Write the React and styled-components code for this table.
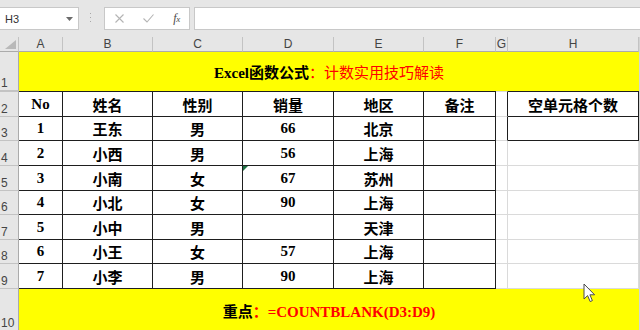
import React from "react";
import styled, { createGlobalStyle } from "styled-components";

const GlobalStyle = createGlobalStyle`
  html, body { margin: 0; padding: 0; }
  body { width: 640px; height: 330px; overflow: hidden; background: #ffffff; }
`;

const DARK = "#1e1e1e";
const LIGHT = "#dadada";
const HEAD_BG = "#e6e6e6";
const HEAD_LINE = "#c3c3c3";

const Window = styled.div`
  position: relative;
  width: 640px;
  height: 330px;
  overflow: hidden;
  background: ${HEAD_BG};
  font-family: "Liberation Sans", "Noto Sans", sans-serif;
`;

const Toolbar = styled.div`
  display: flex;
  align-items: flex-start;
  height: 37px;
  padding-top: 7px;
  box-sizing: border-box;
  background: ${HEAD_BG};
`;

const NameBox = styled.div`
  box-sizing: border-box;
  width: 79px;
  height: 23px;
  background: #fff;
  border: 1px solid #c8c8c8;
  border-left: none;
  display: flex;
  align-items: center;
  justify-content: space-between;
  padding: 0 5px 0 5px;
  font-size: 11px;
  color: #333;
`;

const Grip = styled.svg`
  margin: 6px 0 0 10px;
  flex: none;
`;

const FxBox = styled.div`
  box-sizing: border-box;
  margin-left: 12px;
  width: 86px;
  height: 23px;
  background: #fff;
  border: 1px solid #c8c8c8;
  display: grid;
  grid-template-columns: 29px 29px 27px;
  align-items: center;
  justify-items: center;
`;

const FxText = styled.span`
  font-family: "Liberation Serif", serif;
  font-style: italic;
  font-size: 12px;
  color: #4a4a4a;
  letter-spacing: -0.5px;
  & > small { font-size: 9px; }
`;

const Formula = styled.div`
  box-sizing: border-box;
  margin-left: 4px;
  flex: 1;
  height: 23px;
  background: #fff;
  border: 1px solid #c8c8c8;
  border-right: none;
`;

const Sheet = styled.div`
  display: grid;
  grid-template-columns: 19px 44px 90px 90px 91px 90px 72px 12px 131px 1px;
  grid-template-rows: 15px 39px 26px 24px 25px 25px 24px 25px 24px 25px 42px;
  background: #d4d4d4;
`;

const Corner = styled.div`
  position: relative;
  background: ${HEAD_BG};
  border-right: 1px solid ${HEAD_LINE};
  border-bottom: 1px solid #ababab;
  display: flex;
  align-items: flex-end;
  justify-content: flex-end;
  padding: 0 2px 2px 0;
`;

const ColHead = styled.div`
  background: ${HEAD_BG};
  border-right: 1px solid ${HEAD_LINE};
  border-bottom: 1px solid #ababab;
  display: flex;
  align-items: center;
  justify-content: center;
  font-size: 12px;
  color: #444;
  line-height: 1;
`;

const RowHead = styled.div`
  background: ${HEAD_BG};
  border-right: 1px solid #ababab;
  border-bottom: 1px solid ${HEAD_LINE};
  border-top: ${(p) => (p.$top ? `1px solid ${HEAD_LINE}` : "none")};
  display: flex;
  align-items: flex-end;
  padding: 0 0 1px 1px;
  font-size: 12px;
  line-height: 1;
  color: #444;
`;

const Banner = styled.div`
  grid-column: 2 / 10;
  background: #ffff00;
  display: flex;
  align-items: center;
  justify-content: center;
  font-family: "Liberation Serif", "Noto Sans CJK SC", serif;
  font-size: 15px;
`;

const Strong = styled.span`
  font-weight: 700;
  color: ${(p) => p.$color || "#000"};
`;

const Plain = styled.span`
  font-weight: 400;
  color: ${(p) => p.$color || "#000"};
`;

const Cell = styled.div`
  position: relative;
  background: #fff;
  box-sizing: border-box;
  border-right: 1px solid ${(p) => p.$r || LIGHT};
  border-bottom: 1px solid ${(p) => p.$b || LIGHT};
  border-top: ${(p) => (p.$t ? `1px solid ${p.$t}` : "none")};
  display: flex;
  align-items: center;
  justify-content: center;
  font-family: "Liberation Serif", "Noto Sans CJK SC", serif;
  font-weight: 700;
  font-size: 15px;
  color: #000;
  white-space: nowrap;
`;

const ErrorMark = styled.span`
  position: absolute;
  left: 0;
  top: 0;
  width: 0;
  height: 0;
  border-top: 5px solid #1e7145;
  border-right: 5px solid transparent;
`;

const Filler = styled.div`
  background: #d4d4d4;
`;

const Cursor = styled.svg`
  position: absolute;
  left: 583px;
  top: 283px;
`;

const rows = [
  ["1", "王东", "男", "66", "北京", ""],
  ["2", "小西", "男", "56", "上海", ""],
  ["3", "小南", "女", "67", "苏州", ""],
  ["4", "小北", "女", "90", "上海", ""],
  ["5", "小中", "男", "", "天津", ""],
  ["6", "小王", "女", "57", "上海", ""],
  ["7", "小李", "男", "90", "上海", ""],
];

const header = ["No", "姓名", "性别", "销量", "地区", "备注"];
const letters = ["A", "B", "C", "D", "E", "F", "G", "H"];

function TableRow({ rowNo, values, first }) {
  const t = first ? DARK : undefined;
  const hBox = rowNo <= 3;
  return (
    <>
      <RowHead $top={first}>{rowNo}</RowHead>
      {values.map((v, i) => (
        <Cell key={i} $r={DARK} $b={DARK} $t={t}>
          {rowNo === 5 && i === 3 && <ErrorMark />}
          {v}
        </Cell>
      ))}
      <Cell $r={hBox ? DARK : LIGHT} $t={first ? LIGHT : undefined} />
      <Cell $r={hBox ? DARK : LIGHT} $b={hBox ? DARK : LIGHT} $t={t}>
        {first ? "空单元格个数" : ""}
      </Cell>
      <Filler />
    </>
  );
}

export default function App() {
  return (
    <>
      <GlobalStyle />
      <Window>
        <Toolbar>
          <NameBox>
            <span>H3</span>
            <svg width="7" height="4" viewBox="0 0 7 4">
              <path d="M0 0 L7 0 L3.5 4 Z" fill="#6b6b6b" />
            </svg>
          </NameBox>
          <Grip width="3" height="10" viewBox="0 0 3 10">
            <rect x="1" y="0" width="1" height="1" fill="#a8a8a8" />
            <rect x="1" y="4" width="1" height="1" fill="#a8a8a8" />
            <rect x="1" y="8" width="1" height="1" fill="#a8a8a8" />
          </Grip>
          <FxBox>
            <svg width="9" height="9" viewBox="0 0 9 9">
              <path d="M0.5 0.5 L8.5 8.5 M8.5 0.5 L0.5 8.5" stroke="#b4b4b4" strokeWidth="1.1" />
            </svg>
            <svg width="11" height="9" viewBox="0 0 11 9">
              <path d="M0.5 4.5 L4 8 L10.5 0.5" stroke="#b4b4b4" strokeWidth="1.1" fill="none" />
            </svg>
            <FxText>
              f<small>x</small>
            </FxText>
          </FxBox>
          <Formula />
        </Toolbar>
        <Sheet>
          <Corner>
            <svg width="11" height="9" viewBox="0 0 11 9">
              <path d="M11 0 L11 9 L0 9 Z" fill="#b9b9b9" />
            </svg>
          </Corner>
          {letters.map((l) => (
            <ColHead key={l}>{l}</ColHead>
          ))}
          <Filler />

          <RowHead>1</RowHead>
          <Banner>
            <Strong>Excel函数公式</Strong>
            <Plain $color="#ff0000">：计数实用技巧解读</Plain>
          </Banner>
          <Filler />

          <TableRow rowNo={2} values={header} first />
          {rows.map((r, i) => (
            <TableRow key={i} rowNo={i + 3} values={r} />
          ))}

          <RowHead>10</RowHead>
          <Banner>
            <Strong>重点</Strong>
            <Strong $color="#ff0000">：=COUNTBLANK(D3:D9)</Strong>
          </Banner>
          <Filler />
        </Sheet>
        <Cursor width="13" height="20" viewBox="0 0 13 20">
          <path
            d="M1 1 L1 16 L4.6 12.6 L7.2 18.6 L9.4 17.6 L6.9 11.8 L11.6 11.8 Z"
            fill="#ffffff"
            stroke="#4a4a4a"
            strokeWidth="1"
            strokeLinejoin="round"
          />
        </Cursor>
      </Window>
    </>
  );
}
